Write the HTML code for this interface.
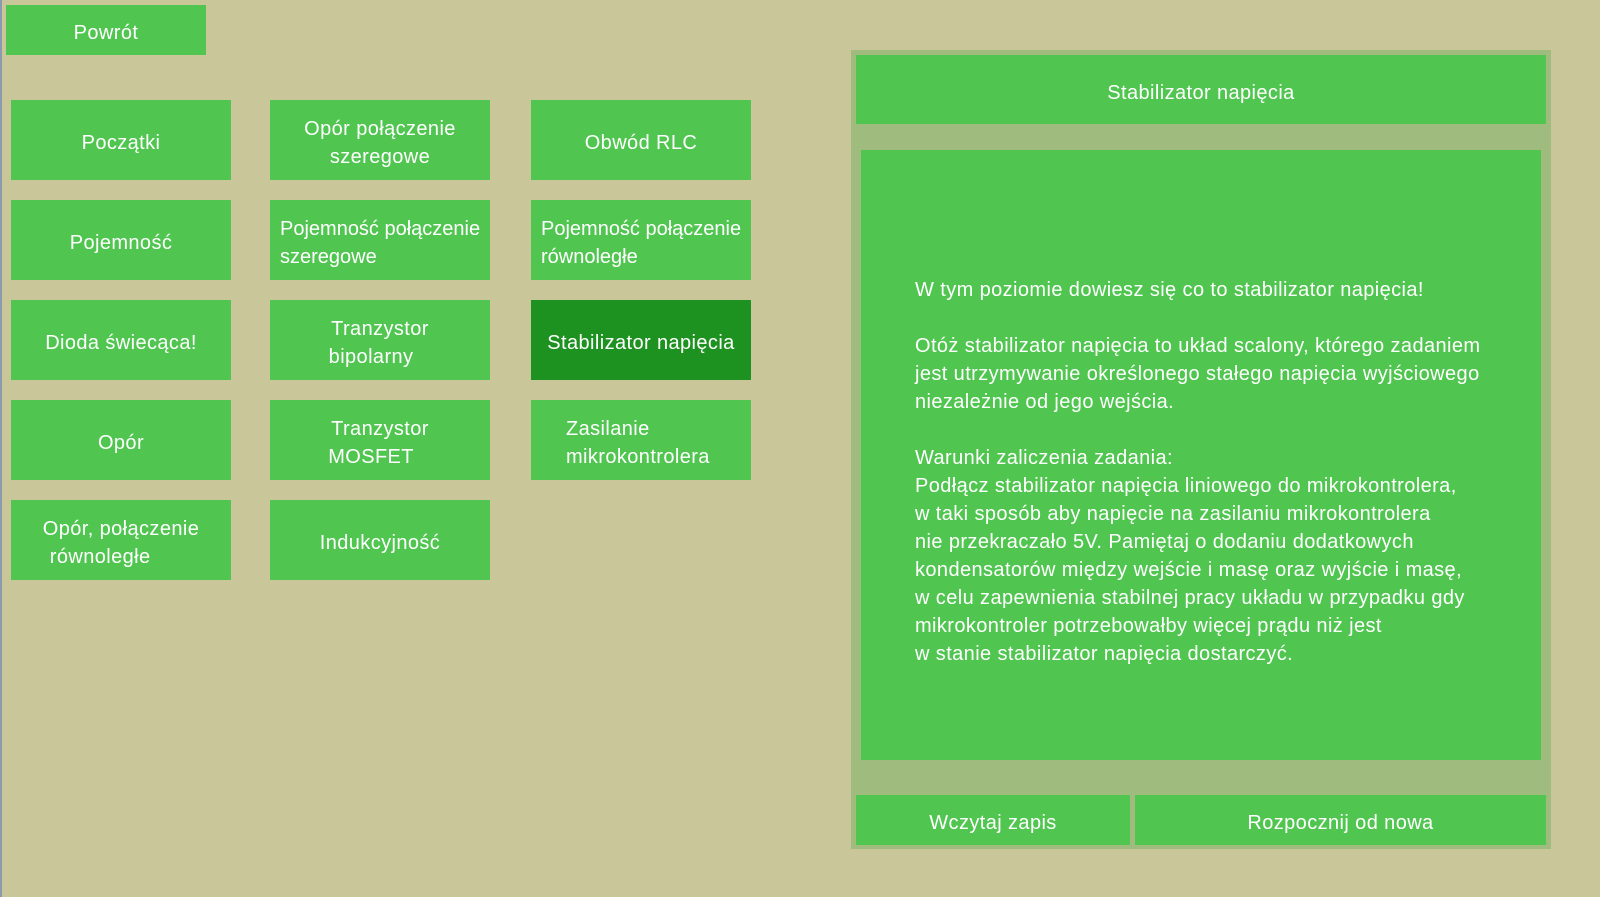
<!DOCTYPE html>
<html><head><meta charset="utf-8"><style>
html,body{margin:0;padding:0}
body{width:1600px;height:897px;background:#c9c799;position:relative;overflow:hidden;font-family:"Liberation Sans",sans-serif;color:#fff;letter-spacing:0.4px}
.b{position:absolute;background:#50c650;display:flex;align-items:center;justify-content:center;text-align:center;font-size:20px;line-height:28px;box-sizing:border-box;padding:6px 10px 0;white-space:nowrap}
.l{text-align:left;justify-content:flex-start;letter-spacing:0}
.d{background:#1e9220}
</style></head><body>
<div style="position:absolute;left:0;top:0;width:2px;height:897px;background:#8a9bb0"></div>
<div class="b" style="left:6px;top:5px;width:200px;height:50px">Powrót</div>

<div class="b" style="left:11px;top:100px;width:220px;height:80px">Początki</div>
<div class="b" style="left:270px;top:100px;width:220px;height:80px">Opór połączenie<br>szeregowe</div>
<div class="b" style="left:531px;top:100px;width:220px;height:80px">Obwód RLC</div>

<div class="b" style="left:11px;top:200px;width:220px;height:80px">Pojemność</div>
<div class="b l" style="left:270px;top:200px;width:220px;height:80px">Pojemność połączenie<br>szeregowe</div>
<div class="b l" style="left:531px;top:200px;width:220px;height:80px">Pojemność połączenie<br>równoległe</div>

<div class="b" style="left:11px;top:300px;width:220px;height:80px">Dioda świecąca!</div>
<div class="b" style="left:270px;top:300px;width:220px;height:80px">Tranzystor<br>bipolarny&nbsp;&nbsp;&nbsp;</div>
<div class="b d" style="left:531px;top:300px;width:220px;height:80px">Stabilizator napięcia</div>

<div class="b" style="left:11px;top:400px;width:220px;height:80px">Opór</div>
<div class="b" style="left:270px;top:400px;width:220px;height:80px">Tranzystor<br>MOSFET&nbsp;&nbsp;&nbsp;</div>
<div class="b" style="left:531px;top:400px;width:220px;height:80px;padding-left:35px;justify-content:flex-start;text-align:left">Zasilanie<br>mikrokontrolera</div>

<div class="b" style="left:11px;top:500px;width:220px;height:80px">Opór, połączenie<br>równoległe&nbsp;&nbsp;&nbsp;&nbsp;&nbsp;&nbsp;&nbsp;</div>
<div class="b" style="left:270px;top:500px;width:220px;height:80px">Indukcyjność</div>

<div style="position:absolute;left:851px;top:50px;width:700px;height:799px;background:#9fbb7e"></div>
<div class="b" style="left:856px;top:55px;width:690px;height:69px">Stabilizator napięcia</div>
<div style="position:absolute;left:861px;top:150px;width:680px;height:610px;background:#50c650;box-sizing:border-box;padding:126px 0 0 54px;font-size:20px;line-height:28px">
W tym poziomie dowiesz się co to stabilizator napięcia!<br><br>
Otóż stabilizator napięcia to układ scalony, którego zadaniem<br>
jest utrzymywanie określonego stałego napięcia wyjściowego<br>
niezależnie od jego wejścia.<br><br>
Warunki zaliczenia zadania:<br>
Podłącz stabilizator napięcia liniowego do mikrokontrolera,<br>
w taki sposób aby napięcie na zasilaniu mikrokontrolera<br>
nie przekraczało 5V. Pamiętaj o dodaniu dodatkowych<br>
kondensatorów między wejście i masę oraz wyjście i masę,<br>
w celu zapewnienia stabilnej pracy układu w przypadku gdy<br>
mikrokontroler potrzebowałby więcej prądu niż jest<br>
w stanie stabilizator napięcia dostarczyć.
</div>
<div class="b" style="left:856px;top:795px;width:274px;height:50px">Wczytaj zapis</div>
<div class="b" style="left:1135px;top:795px;width:411px;height:50px">Rozpocznij od nowa</div>
</body></html>
